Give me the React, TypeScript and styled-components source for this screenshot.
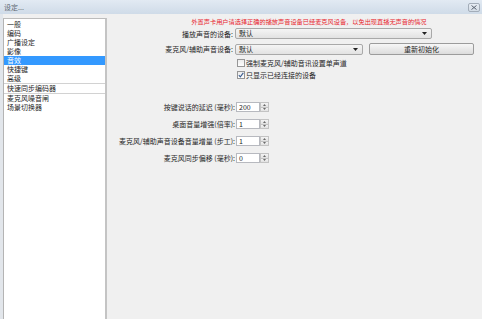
import React from "react";
import styled, { createGlobalStyle } from "styled-components";

const sections = [
  "一般",
  "编码",
  "广播设定",
  "影像",
  "音效",
  "快捷键",
  "高级",
  "快速同步编码器",
  "麦克风噪音闸",
  "场景切换器",
];

const spinFields = [
  { label: "按键说话的延迟 (毫秒):", value: "200" },
  { label: "桌面音量增强(倍率):", value: "1" },
  { label: "麦克风/辅助声音设备音量增量 (步工):", value: "1" },
  { label: "麦克风同步偏移 (毫秒):", value: "0" },
];

const App: React.FC = () => (
  <Window>
    <GlobalStyle />
    <TitleBar>
      <span>设定...</span>
      <CloseButton>
        <svg width="6" height="5" viewBox="0 0 6 5">
          <path d="M0.5 0.5 L5.5 4.5 M5.5 0.5 L0.5 4.5" stroke="#5a6572" strokeWidth="1" />
        </svg>
      </CloseButton>
    </TitleBar>
    <Body>
      <Sidebar>
        {sections.map((name, i) => (
          <SectionItem key={name} $selected={i === 4} $boxed={i === 7}>
            {name}
          </SectionItem>
        ))}
      </Sidebar>
      <Content>
        <Notice>外置声卡用户请选择正确的播放声音设备已经麦克风设备，以免出现直播无声音的情况</Notice>
        <FieldRow $top={1}>
          <Label>播放声音的设备:</Label>
          <Select $width={197}>
            默认
            <Arrow />
          </Select>
        </FieldRow>
        <FieldRow $top={4}>
          <Label>麦克风/辅助声音设备:</Label>
          <Select $width={128}>
            默认
            <Arrow />
          </Select>
          <Button>重新初始化</Button>
        </FieldRow>
        <CheckRow $top={2}>
          <CheckBox />
          强制麦克风/辅助音讯设置单声道
        </CheckRow>
        <CheckRow $top={0}>
          <CheckBox>
            <svg width="6" height="6" viewBox="0 0 6 6">
              <path d="M0.8 3.2 L2.3 4.8 L5.3 0.8" fill="none" stroke="#3b5d8f" strokeWidth="1.1" />
            </svg>
          </CheckBox>
          只显示已经连接的设备
        </CheckRow>
        <SpinGroup>
          {spinFields.map(f => (
            <SpinRow key={f.label}>
              <SpinLabel>{f.label}</SpinLabel>
              <SpinInput>{f.value}</SpinInput>
              <Spinner>
                <SpinHalf>
                  <svg width="3" height="2" viewBox="0 0 3 2">
                    <path d="M0 2 L1.5 0 L3 2 Z" fill="#6a6a6a" />
                  </svg>
                </SpinHalf>
                <SpinHalf>
                  <svg width="3" height="2" viewBox="0 0 3 2">
                    <path d="M0 0 L1.5 2 L3 0 Z" fill="#6a6a6a" />
                  </svg>
                </SpinHalf>
              </Spinner>
            </SpinRow>
          ))}
        </SpinGroup>
      </Content>
    </Body>
  </Window>
);

const Arrow: React.FC = () => (
  <ArrowMark width="5" height="3" viewBox="0 0 5 3">
    <path d="M0 0 L5 0 L2.5 3 Z" fill="#222" />
  </ArrowMark>
);

const GlobalStyle = createGlobalStyle`
  html, body, #root {
    height: 100%;
  }
  body {
    margin: 0;
    overflow: hidden;
    background: #f0f0f0;
    font-family: "Noto Sans CJK SC", "Noto Sans", sans-serif;
    color: #262626;
  }
`;

const Window = styled.div`
  display: flex;
  flex-direction: column;
  height: 100%;
`;

const TitleBar = styled.div`
  height: 14px;
  flex: none;
  display: flex;
  align-items: center;
  justify-content: space-between;
  padding: 0 2px 0 4px;
  box-sizing: border-box;
  background: linear-gradient(#e2eaf3, #cfdbe8);
  font-size: 7px;
  color: #5c6670;
`;

const CloseButton = styled.div`
  width: 12px;
  height: 9px;
  box-sizing: border-box;
  border: 1px solid #a3adb9;
  border-radius: 2px;
  background: linear-gradient(#e7edf4, #d3dce6);
  display: grid;
  place-items: center;
`;

const Body = styled.div`
  flex: 1;
  display: flex;
  padding-left: 3px;
  background: linear-gradient(90deg, #e2e6eb 0, #e2e6eb 3px, #f0f0f0 3px);
`;

const Sidebar = styled.div`
  width: 101px;
  flex: none;
  margin-top: 4px;
  padding-top: 1px;
  background: #fff;
  border-top: 1px solid #bcbcbc;
  border-left: 1px solid #b4b4b4;
  border-right: 2px solid #c4c4c4;
  font-size: 7px;
`;

const SectionItem = styled.div<{ $selected: boolean; $boxed: boolean }>`
  height: 9px;
  line-height: 9px;
  padding-left: 3px;
  white-space: nowrap;
  background: ${p => (p.$selected ? "#3399ff" : "transparent")};
  color: ${p => (p.$selected ? "#fff" : "#262626")};
  border-top: ${p => (p.$boxed ? "1px solid #d2d2d2" : "none")};
  border-bottom: ${p => (p.$boxed ? "1px solid #d2d2d2" : "none")};
`;

const Content = styled.div`
  flex: 1;
  display: flex;
  flex-direction: column;
  font-size: 7px;
`;

const Notice = styled.div`
  margin-top: 3px;
  height: 10px;
  line-height: 10px;
  padding-left: 29px;
  text-align: center;
  font-size: 6.2px;
  color: #e8232b;
  white-space: nowrap;
`;

const FieldRow = styled.div<{ $top: number }>`
  display: flex;
  align-items: center;
  margin-top: ${p => p.$top}px;
`;

const Label = styled.div`
  width: 126px;
  flex: none;
  margin-right: 2px;
  text-align: right;
  white-space: nowrap;
`;

const Select = styled.div<{ $width: number }>`
  width: ${p => p.$width}px;
  height: 11px;
  box-sizing: border-box;
  display: flex;
  align-items: center;
  justify-content: space-between;
  padding: 0 4px 0 3px;
  border: 1px solid #a9a9a9;
  border-radius: 2px;
  background: linear-gradient(#f5f5f5, #e2e2e2);
  line-height: 1;
`;

const ArrowMark = styled.svg`
  display: block;
`;

const Button = styled.div`
  width: 105px;
  height: 12px;
  margin-left: 6px;
  box-sizing: border-box;
  display: grid;
  place-items: center;
  border: 1px solid #9c9c9c;
  border-radius: 2px;
  background: linear-gradient(#f7f7f7, #dcdcdc);
  line-height: 1;
`;

const CheckRow = styled.div<{ $top: number }>`
  height: 12px;
  display: flex;
  align-items: center;
  margin-top: ${p => p.$top}px;
  padding-left: 130px;
  white-space: nowrap;
`;

const CheckBox = styled.div`
  width: 8px;
  height: 8px;
  box-sizing: border-box;
  margin-right: 1px;
  border: 1px solid #969696;
  background: linear-gradient(#ececec, #fdfdfd);
  display: grid;
  place-items: center;
`;

const SpinGroup = styled.div`
  margin-top: 21px;
  display: flex;
  flex-direction: column;
  gap: 7px;
`;

const SpinRow = styled.div`
  display: grid;
  grid-template-columns: 128px 24px 8px;
  column-gap: 1px;
  align-items: center;
  height: 10px;
`;

const SpinLabel = styled.div`
  text-align: right;
  white-space: nowrap;
`;

const SpinInput = styled.div`
  height: 10px;
  box-sizing: border-box;
  padding-left: 2px;
  border: 1px solid #b7b9bf;
  background: #fff;
  line-height: 8px;
`;

const Spinner = styled.div`
  height: 10px;
  margin-left: -1px;
  display: flex;
  flex-direction: column;
`;

const SpinHalf = styled.div`
  flex: 1;
  display: grid;
  place-items: center;
  box-sizing: border-box;
  border: 1px solid #c3c3c3;
  background: linear-gradient(#f4f4f4, #e1e1e1);
  & + & {
    border-top: none;
  }
`;

export default App;
